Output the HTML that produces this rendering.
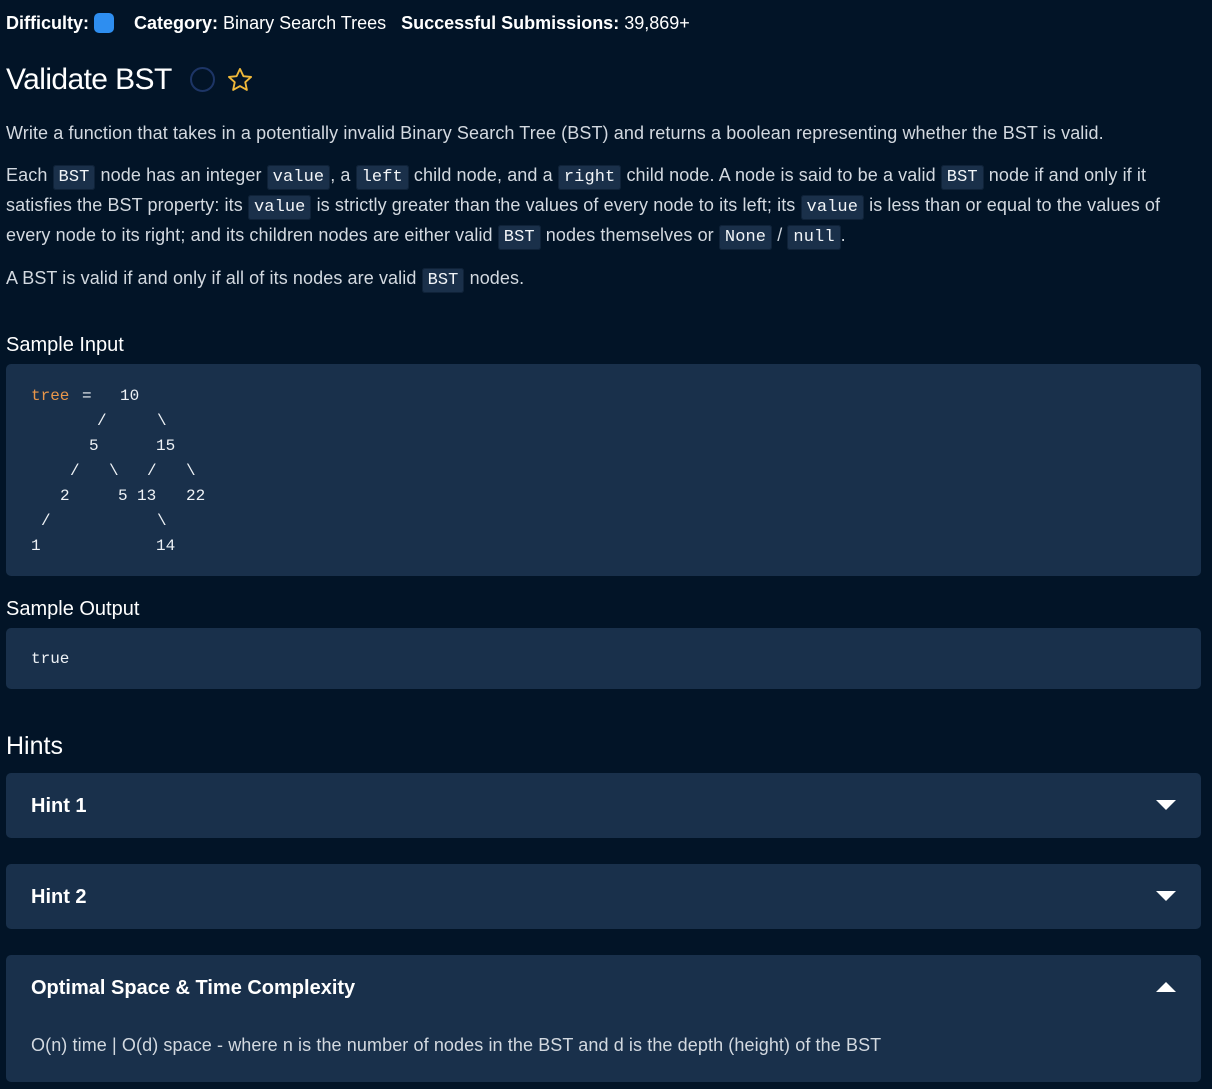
<!DOCTYPE html>
<html><head><meta charset="utf-8"><style>
*{margin:0;padding:0;box-sizing:border-box}
body{width:1212px;height:1089px;background:#021427;color:#dde3ea;font-family:"Liberation Sans",sans-serif;position:relative;overflow:hidden}
.a{position:absolute;white-space:nowrap}
.p{font-size:18px;color:#d3d9e0;letter-spacing:0.1px}
code{font-family:"Liberation Mono",monospace;font-size:17px;background:#1a304a;color:#f2f5f8;border-radius:3px;padding:2px 5px;border:1px solid #0f2238}
.box{position:absolute;left:6px;width:1195px;background:#19304b;border-radius:5px}
.m{position:absolute;font-family:"Liberation Mono",monospace;font-size:16px;color:#eef2f6}
.h{font-size:20px;font-weight:bold;color:#fff}
.tri{position:absolute;width:0;height:0;border-left:10px solid transparent;border-right:10px solid transparent}
</style></head><body>
<div class="a" style="left:6px;top:13px;font-size:18px;color:#fff"><b>Difficulty:</b> <span style="display:inline-block;width:20px;height:20px;background:#2e8ef0;border-radius:5px;vertical-align:-4px"></span>&nbsp;&nbsp;&nbsp;&nbsp;<b>Category:</b> Binary Search Trees&nbsp;&nbsp;&nbsp;<b>Successful Submissions:</b> 39,869+</div>
<div class="a" style="left:6px;top:63px;font-size:30px;letter-spacing:-0.6px;color:#fff">Validate BST</div>
<div class="a" style="left:190px;top:67px;width:25px;height:25px;border:2px solid #1d3566;border-radius:50%"></div>
<svg class="a" style="left:226px;top:66px" width="28" height="28" viewBox="0 0 24 24"><path d="M12 2.5l2.9 6.2 6.6.7-5 4.5 1.4 6.6L12 17.2 6.1 20.5l1.4-6.6-5-4.5 6.6-.7z" fill="none" stroke="#f0b93a" stroke-width="1.6" stroke-linejoin="round"/></svg>
<div class="a p" style="left:6px;top:123px">Write a function that takes in a potentially invalid Binary Search Tree (BST) and returns a boolean representing whether the BST is valid.</div>
<div class="a p" style="left:6px;top:165px">Each <code>BST</code> node has an integer <code>value</code>, a <code>left</code> child node, and a <code>right</code> child node. A node is said to be a valid <code>BST</code> node if and only if it</div>
<div class="a p" style="left:6px;top:195px">satisfies the BST property: its <code>value</code> is strictly greater than the values of every node to its left; its <code>value</code> is less than or equal to the values of</div>
<div class="a p" style="left:6px;top:225px">every node to its right; and its children nodes are either valid <code>BST</code> nodes themselves or <code>None</code> / <code>null</code>.</div>
<div class="a p" style="left:6px;top:268px">A BST is valid if and only if all of its nodes are valid <code>BST</code> nodes.</div>
<div class="a" style="left:6px;top:334px;font-size:20px;color:#fff">Sample Input</div>
<div class="box" style="top:364px;height:212px"></div>
<div class="m" style="left:31px;top:387px"><span style="color:#e8964a">tree</span></div>
<div class="m" style="left:82px;top:387px">=</div>
<div class="m" style="left:120px;top:387px">10</div>
<div class="m" style="left:97px;top:412px">/</div><div class="m" style="left:157px;top:412px">\</div>
<div class="m" style="left:89px;top:437px">5</div><div class="m" style="left:156px;top:437px">15</div>
<div class="m" style="left:70px;top:462px">/</div><div class="m" style="left:109px;top:462px">\</div><div class="m" style="left:147px;top:462px">/</div><div class="m" style="left:186px;top:462px">\</div>
<div class="m" style="left:60px;top:487px">2</div><div class="m" style="left:118px;top:487px">5</div><div class="m" style="left:137px;top:487px">13</div><div class="m" style="left:186px;top:487px">22</div>
<div class="m" style="left:41px;top:512px">/</div><div class="m" style="left:157px;top:512px">\</div>
<div class="m" style="left:31px;top:537px">1</div><div class="m" style="left:156px;top:537px">14</div>
<div class="a" style="left:6px;top:598px;font-size:20px;color:#fff">Sample Output</div>
<div class="box" style="top:628px;height:61px"></div>
<div class="m" style="left:31px;top:650px">true</div>
<div class="a" style="left:6px;top:732px;font-size:25px;color:#fff">Hints</div>
<div class="box" style="top:773px;height:65px"></div>
<div class="a h" style="left:31px;top:795px">Hint 1</div>
<div class="tri" style="left:1156px;top:800px;border-top:10px solid #fff"></div>
<div class="box" style="top:864px;height:65px"></div>
<div class="a h" style="left:31px;top:886px">Hint 2</div>
<div class="tri" style="left:1156px;top:891px;border-top:10px solid #fff"></div>
<div class="box" style="top:955px;height:127px"></div>
<div class="a h" style="left:31px;top:977px">Optimal Space &amp; Time Complexity</div>
<div class="tri" style="left:1156px;top:982px;border-bottom:10px solid #fff"></div>
<div class="a p" style="left:31px;top:1035px">O(n) time | O(d) space - where n is the number of nodes in the BST and d is the depth (height) of the BST</div>
</body></html>
